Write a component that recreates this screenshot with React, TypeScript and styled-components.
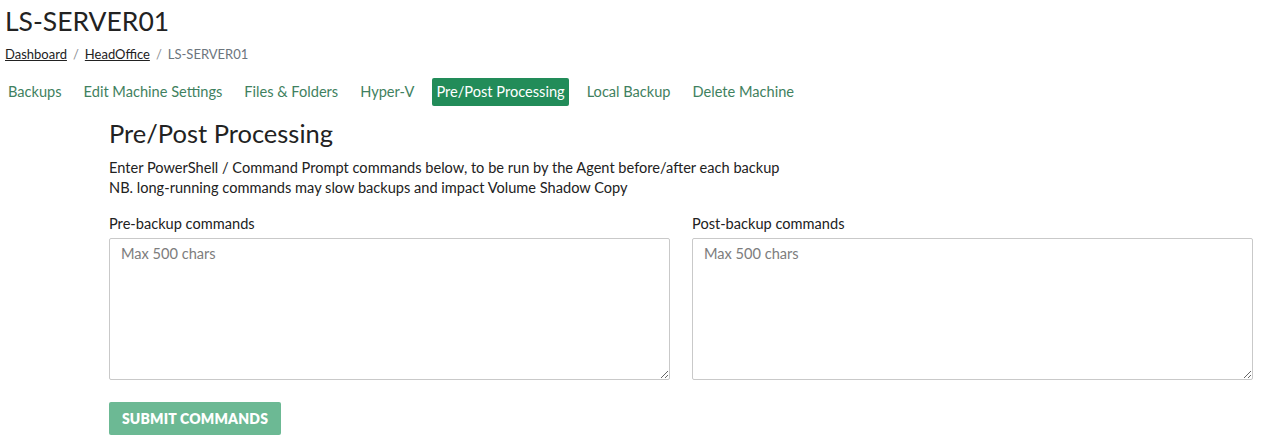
import React from "react";
import styled, { createGlobalStyle } from "styled-components";

const Global = createGlobalStyle`
  html, body { margin: 0; padding: 0; background: #fff; }
  body { font-family: "Lato", "Noto Sans", sans-serif; color: #212529; }
  * { box-sizing: border-box; }
`;

const Page = styled.div`
  padding: 4px 11px 0 5px;
`;

const Title = styled.h1`
  margin: 0;
  font-size: 26.5px;
  font-weight: 400;
  line-height: 34px;
  color: #222;
`;

const Crumbs = styled.nav`
  display: flex;
  gap: 6px;
  margin-top: 7px;
  font-size: 13px;
  line-height: 18px;
  color: #6c757d;
`;

const CrumbLink = styled.a`
  color: #222;
  text-decoration: underline;
`;

const Sep = styled.span`
  color: #8a8f94;
`;

const Tabs = styled.div`
  display: flex;
  align-items: center;
  margin-top: 15px;
  margin-left: -1px;
`;

const Tab = styled.a<{ $active?: boolean }>`
  display: block;
  padding: 0 4px;
  margin-right: 14px;
  height: 28px;
  line-height: 28px;
  font-size: 14.6px;
  border-radius: 2px;
  color: ${(p) => (p.$active ? "#fff" : "#3f8160")};
  background: ${(p) => (p.$active ? "#228c59" : "transparent")};
  text-decoration: none;
`;

const Content = styled.section`
  padding-left: 104px;
  margin-top: 11px;
`;

const Heading = styled.h2`
  margin: 0;
  font-size: 25.5px;
  font-weight: 400;
  line-height: 32px;
  color: #222;
`;

const Intro = styled.p`
  margin: 9px 0 0;
  font-size: 14.6px;
  line-height: 20px;
  color: #222;
`;

const Grid = styled.div`
  display: grid;
  grid-template-columns: 1fr 1fr;
  column-gap: 22px;
  margin-top: 16px;
`;

const Field = styled.div`
  display: flex;
  flex-direction: column;
`;

const Label = styled.label`
  font-size: 14.6px;
  line-height: 20px;
  color: #222;
  margin-bottom: 4px;
`;

const Area = styled.textarea`
  height: 142px;
  width: 100%;
  resize: vertical;
  border: 1px solid #c9c9c9;
  border-radius: 2px;
  padding: 5px 11px;
  font-family: inherit;
  font-size: 14.6px;
  line-height: 20px;
  color: #222;
  &::placeholder { color: #7d7d7d; }
`;

const Submit = styled.button`
  margin-top: 22px;
  width: 172px;
  height: 33px;
  border: none;
  border-radius: 2px;
  background: #6cb994;
  color: #fff;
  font-family: inherit;
  font-weight: 800;
  font-size: 14px;
  letter-spacing: 0.2px;
  text-transform: uppercase;
`;

const tabs = [
  "Backups",
  "Edit Machine Settings",
  "Files & Folders",
  "Hyper-V",
  "Pre/Post Processing",
  "Local Backup",
  "Delete Machine",
];

export default function App() {
  return (
    <Page>
      <Global />
      <Title>LS-SERVER01</Title>
      <Crumbs>
        <CrumbLink>Dashboard</CrumbLink>
        <Sep>/</Sep>
        <CrumbLink>HeadOffice</CrumbLink>
        <Sep>/</Sep>
        <span>LS-SERVER01</span>
      </Crumbs>
      <Tabs>
        {tabs.map((t) => (
          <Tab key={t} $active={t === "Pre/Post Processing"}>
            {t}
          </Tab>
        ))}
      </Tabs>
      <Content>
        <Heading>Pre/Post Processing</Heading>
        <Intro>
          Enter PowerShell / Command Prompt commands below, to be run by the Agent before/after each backup
          <br />
          NB. long-running commands may slow backups and impact Volume Shadow Copy
        </Intro>
        <Grid>
          <Field>
            <Label>Pre-backup commands</Label>
            <Area placeholder="Max 500 chars" />
          </Field>
          <Field>
            <Label>Post-backup commands</Label>
            <Area placeholder="Max 500 chars" />
          </Field>
        </Grid>
        <Submit disabled>Submit Commands</Submit>
      </Content>
    </Page>
  );
}
